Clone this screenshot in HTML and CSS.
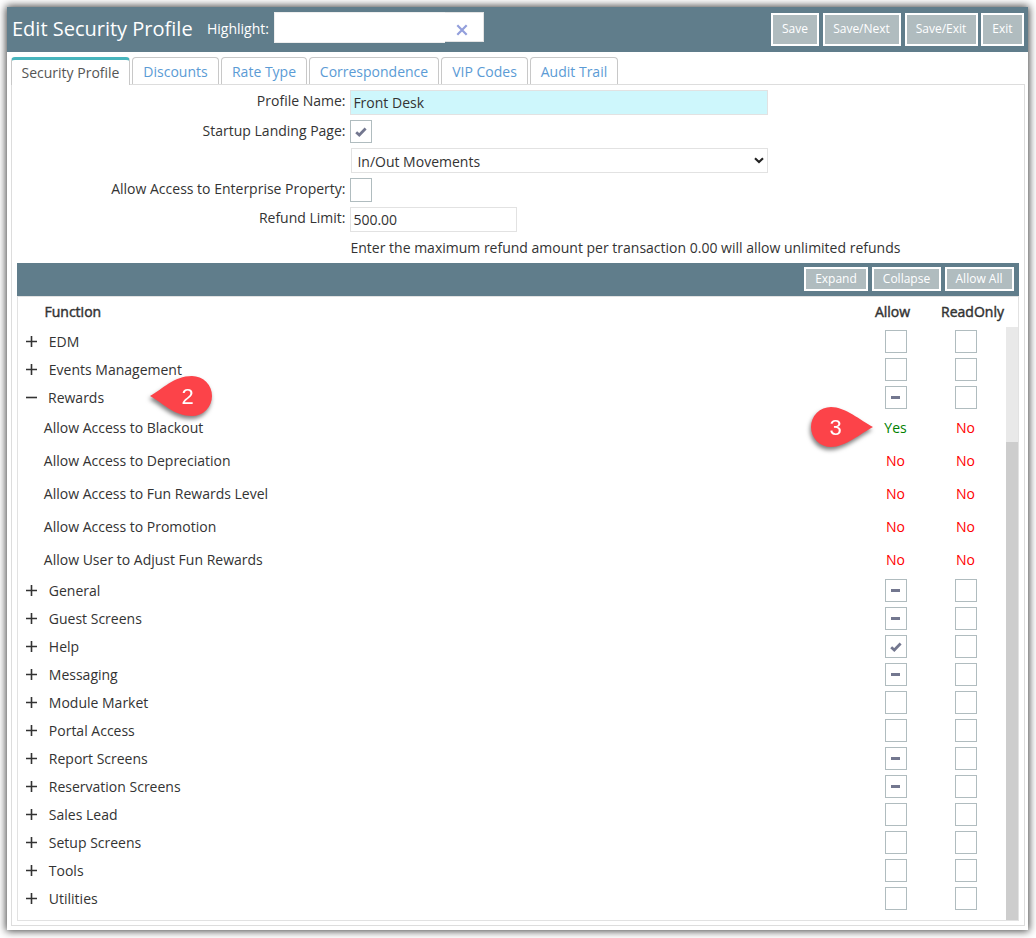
FILE: index.html
```
<!DOCTYPE html>
<html lang="en">
<head>
<meta charset="utf-8">
<title>Edit Security Profile</title>
<link rel="stylesheet" href="styles.css">
</head>
<body>
<svg class="defs" width="0" height="0">
  <symbol id="plus" viewBox="0 0 12 12"><path d="M0 5.500h11M5.500 0v11" stroke="#333" stroke-width="1.6" fill="none"/></symbol>
  <symbol id="minus" viewBox="0 0 12 12"><path d="M0 5.500h11" stroke="#333" stroke-width="1.6" fill="none"/></symbol>
  <symbol id="check" viewBox="0 0 12 10"><path d="M1.2 5.2L4.3 8L10.6 1.6" stroke="#73778f" stroke-width="2.8" fill="none"/></symbol>
</svg>
<div class="window">
  <header class="header">
    <h1 class="title">Edit Security Profile</h1>
    <span class="highlight-label">Highlight:</span>
    <div class="search"><div class="search-text"></div><div class="search-clear"><svg width="12" height="12" viewBox="0 0 12 12"><path d="M1.3 1.3l9.4 9.4M10.7 1.3L1.3 10.7" stroke="#939fdc" stroke-width="2.2"/></svg></div></div>
    <div class="actions">
      <button class="btn save">Save</button><button class="btn next">Save/Next</button><button class="btn save-exit">Save/Exit</button><button class="btn exit">Exit</button>
    </div>
  </header>
  <nav class="tabs">
    <a class="tab active">Security Profile</a><a class="tab t2">Discounts</a><a class="tab t3">Rate Type</a><a class="tab t4">Correspondence</a><a class="tab t5">VIP Codes</a><a class="tab t6">Audit Trail</a>
  </nav>
  <main class="panel">
    <div class="form">
      <div class="field h30"><label>Profile Name:</label><div class="input name">Front Desk</div></div>
      <div class="field h28"><label>Startup Landing Page:</label><span class="box"><svg width="12" height="10"><use href="#check"/></svg></span></div>
      <div class="field h30"><label></label><div class="input select">In/Out Movements<svg width="10" height="7" viewBox="0 0 10 7"><path d="M1 1.2l4 3.9 4-3.9" stroke="#222" stroke-width="2.1" fill="none"/></svg></div></div>
      <div class="field h29"><label>Allow Access to Enterprise Property:</label><span class="box tall"></span></div>
      <div class="field h31"><label>Refund Limit:</label><div class="input limit">500.00</div></div>
      <div class="field h25"><label></label><span class="hint">Enter the maximum refund amount per transaction 0.00 will allow unlimited refunds</span></div>
    </div>
    <div class="toolbar"><button class="btn small expand">Expand</button><button class="btn small collapse">Collapse</button><button class="btn small all">Allow All</button></div>
    <section class="grid">
      <div class="grid-head"><span class="fn">Function</span><span class="h-allow">Allow</span><span class="h-read">ReadOnly</span></div>
      <div class="grid-body">
        <div class="rows" id="rows"></div>
        <div class="scroll"><div class="thumb"></div></div>
      </div>
    </section>
  </main>
  <svg class="pin two" width="74" height="56" viewBox="0 0 74 56"><path d="M4 24C16 17.500 28 4 46 4A20 20 0 0 1 46 44C28 44 16 30.500 4 24Z" fill="#fc4349"/><text x="41.500" y="32">2</text></svg>
  <svg class="pin three" width="74" height="56" viewBox="0 0 74 56"><path d="M70 24C58 17.500 42 4 28 4A20 20 0 0 0 28 44C42 44 58 30.500 70 24Z" fill="#fc4349"/><text x="32.500" y="32">3</text></svg>
</div>
<script src="script.js"></script>
</body>
</html>
```
FILE: styles.css
```
* { box-sizing: border-box; }
body { margin: 0; padding: 7px 8px 8px 7px; width: 1036px; height: 938px; overflow: hidden; background: #fff; font: 14px/20px "Open Sans", sans-serif; color: #333; }
.defs { position: absolute; }
svg { display: block; flex: none; }
.window { position: relative; width: 1021px; height: 923px; background: #fff; box-shadow: 0 0 8px 1px rgba(0,0,0,.75); }
.header { display: flex; align-items: flex-start; height: 45px; padding: 4px 4px 0 5px; background: #607d8b; color: #fff; }
.title { margin: 4px 0 0; width: 195px; font-size: 20px; line-height: 28px; font-weight: 400; white-space: nowrap; }
.highlight-label { width: 67px; margin-top: 8px; }
.search { display: flex; margin-top: 1px; }
.search-text { width: 171px; height: 31px; background: #fff; border: 1px solid #eee; border-right: 0; }
.search-clear { display: flex; align-items: center; width: 39px; height: 30px; padding: 5px 0 0 11px; background: #fff; border: 1px solid #e3e3e3; border-left: 0; }
.actions { display: flex; margin: 2px 0 0 auto; }
.btn { height: 33px; padding: 0 0 1px; border: 2px solid #fff; background: #b0bcbf; color: #fff; font: 12px/20px "Open Sans", sans-serif; white-space: nowrap; }
.save { width: 48px; margin-right: 4px; }
.next { width: 78px; margin-right: 4px; padding-right: 1px; }
.save-exit { width: 73px; margin-right: 3px; padding-right: 1px; }
.exit { width: 43px; }
.tabs { display: flex; gap: 2px; height: 33px; padding: 5px 0 0 4px; position: relative; z-index: 1; }
.tab { height: 27px; padding: 4px 0 0; text-align: center; border: 1px solid #c8c8c8; border-bottom: 0; border-radius: 4px 4px 0 0; background: #fff; color: #5b9bd5; }
.tab.active { width: 119px; height: 28px; padding-top: 3px; border-top: 3px solid #48b5bd; color: #555; }
.t2 { width: 87px; } .t3 { width: 86px; } .t4 { width: 130px; } .t5 { width: 87px; } .t6 { width: 88px; }
.panel { margin: -1px 3px 0 4px; height: 842px; padding: 5px 5px 0; border: 1px solid #ddd; }
.field { display: flex; align-items: flex-start; gap: 4px; }
.field label { width: 329px; margin-top: 1px; padding-right: .5px; text-align: right; }
.h25 { height: 25px; } .h28 { height: 28px; } .h29 { height: 29px; } .h30 { height: 30px; } .h31 { height: 31px; }
.input { height: 25px; padding: 2px 2.400px; border: 1px solid #e2e2e2; }
.name { width: 418px; background: #cef7fc; }
.select { display: flex; justify-content: space-between; width: 417px; margin-left: 1px; padding: 3px 3px 0 5.400px; }
.select svg { margin-top: 5px; }
.limit { width: 167px; }
.hint { margin-left: .5px; }
.box { display: flex; align-items: center; justify-content: center; width: 22px; height: 23px; border: 1px solid #b0bcbf; background: #fff; }
.box.tall { height: 24px; }
.dash { width: 9px; height: 3px; margin: 0 1px 0 0; background: #73778f; }
.toolbar { display: flex; justify-content: flex-end; gap: 4px; height: 33px; padding: 4px 5px 0 0; background: #607d8b; }
.small { height: 24px; line-height: 18px; }
.expand { width: 64px; } .collapse { width: 69px; } .all { width: 69px; padding-right: 1px; }
.grid { height: 625px; border: 1px solid #e2e2e2; }
.grid-head { display: flex; height: 30px; padding: 5px 0 0 26.500px; -webkit-text-stroke: .45px #333; }
.grid-head span { flex: none; }
.fn { width: 818px; }
.h-allow { width: 60px; text-align: center; }
.h-read { width: 100px; text-align: center; }
.grid-body { display: flex; height: 593px; }
.rows { flex: 1; padding-top: 1px; }
.row { display: grid; grid-template-columns: 31px 811px 70px 70px; align-items: center; height: 28px; }
.row svg { margin-left: 8px; }
.row .box svg { margin: 1px 1px 0 0; }
.row.child { grid-template-columns: 26px 815.500px 70px 70px; height: 33px; padding-bottom: 2px; }
.label { margin-left: -.2px; }
.open .label { margin-left: -1px; }
.cell { display: flex; justify-content: center; padding-bottom: 1px; }
.row .box { margin-left: 2px; }
.yes { color: #008000; } .no { color: #f00; }
.row .yes, .row .no { width: 72px; text-align: center; }
.scroll { width: 12px; background: #e9e9e9; padding-top: 115px; }
.thumb { height: 478px; background: #cdcdcd; }
.pin { position: absolute; filter: drop-shadow(-1px 3px 2px rgba(0,0,0,.5)); }
.pin text { fill: #fff; font: 22px "Liberation Sans", Arial, sans-serif; text-anchor: middle; }
.two { left: 139px; top: 365px; }
.three { left: 796px; top: 396px; }
```
FILE: script.js
```
const data = [
  ['EDM', ''], ['Events Management', ''], ['Rewards', 'dash', 'open'],
  ['Allow Access to Blackout', 'Yes', 'child'], ['Allow Access to Depreciation', 'No', 'child'],
  ['Allow Access to Fun Rewards Level', 'No', 'child'], ['Allow Access to Promotion', 'No', 'child'],
  ['Allow User to Adjust Fun Rewards', 'No', 'child'],
  ['General', 'dash'], ['Guest Screens', 'dash'], ['Help', 'check'], ['Messaging', 'dash'],
  ['Module Market', ''], ['Portal Access', ''], ['Report Screens', 'dash'], ['Reservation Screens', 'dash'],
  ['Sales Lead', ''], ['Setup Screens', ''], ['Tools', ''], ['Utilities', '']
];
const marks = {
  '': '',
  dash: '<span class="dash"></span>',
  check: '<svg width="12" height="10"><use href="#check"/></svg>'
};
const box = mark => `<span class="cell"><span class="box">${marks[mark]}</span></span>`;
const word = w => `<span class="${w.toLowerCase()}">${w}</span>`;
document.getElementById('rows').innerHTML = data.map(([name, state, kind = '']) =>
  kind === 'child'
    ? `<div class="row child"><span></span><span class="label">${name}</span>${word(state)}${word('No')}</div>`
    : `<div class="row ${kind}"><svg width="12" height="12"><use href="#${kind === 'open' ? 'minus' : 'plus'}"/></svg><span class="label">${name}</span>${box(state)}${box('')}</div>`
).join('');
```
